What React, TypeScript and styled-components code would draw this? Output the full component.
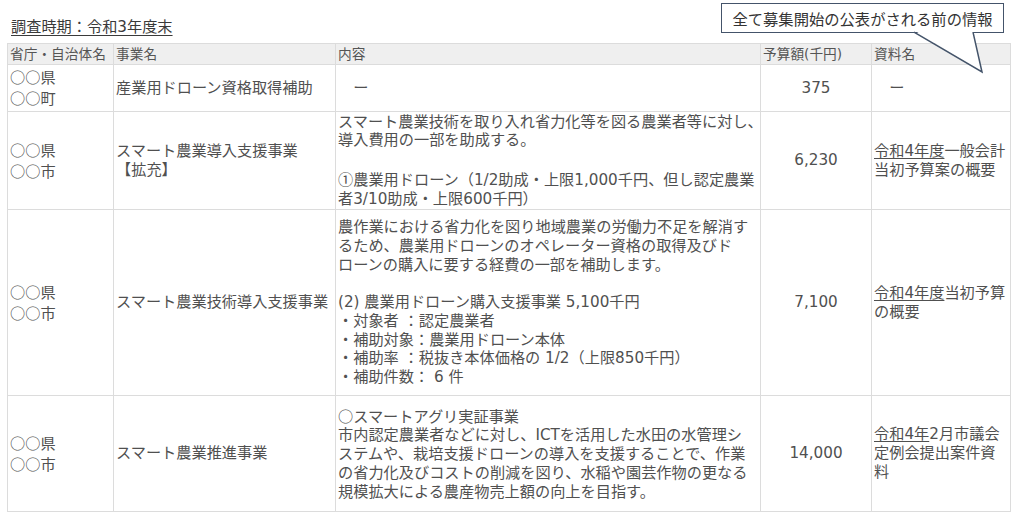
import React from "react";
import styled, { createGlobalStyle } from "styled-components";

const FONT = `"DejaVu Sans", "Noto Sans CJK JP", "Noto Sans", sans-serif`;

const GlobalStyle = createGlobalStyle`
  html, body {
    margin: 0;
    padding: 0;
    background: #ffffff;
  }
  body {
    font-family: ${FONT};
    color: #505050;
  }
`;

const Page = styled.div`
  position: relative;
  width: 1024px;
  height: 513px;
  box-sizing: border-box;
  padding: 18px 0 0 7px;
  overflow: hidden;
`;

const Title = styled.div`
  margin-left: 4px;
  font-size: 15.2px;
  line-height: 19px;
  text-decoration: underline;
  text-underline-offset: 3px;
  text-decoration-thickness: 1px;
  color: #3a3a3a;
`;

const Table = styled.table`
  margin-top: 6px;
  border-collapse: collapse;
  table-layout: fixed;
  width: 1003px;
`;

const HeadRow = styled.tr`
  height: 21px;
  background: #efefef;
`;

const HeadCell = styled.th`
  border: 1px solid #dcdcdc;
  padding: 0 2px;
  font-size: 13.7px;
  line-height: 17px;
  font-weight: normal;
  text-align: left;
  vertical-align: middle;
  white-space: nowrap;
  color: #555555;
`;

const Row = styled.tr<{ $h: number }>`
  height: ${(p) => p.$h}px;
`;

const Cell = styled.td<{ $align?: "left" | "center" }>`
  border: 1px solid #dcdcdc;
  padding: 0 2px;
  font-size: 15.2px;
  line-height: 18.75px;
  text-align: ${(p) => p.$align ?? "left"};
  vertical-align: middle;
  white-space: nowrap;
  color: #505050;
`;

const Cjk = styled.span`
  font-family: "Noto Sans CJK JP", sans-serif;
`;

const Link = styled.span`
  text-decoration: underline;
  text-underline-offset: 2px;
  text-decoration-thickness: 1px;
`;

const Callout = styled.div`
  position: absolute;
  left: 721px;
  top: 3px;
  width: 283px;
  height: 30px;
  box-sizing: border-box;
  border: 1.5px solid #44546a;
  background: #ffffff;
  display: flex;
  align-items: center;
  justify-content: center;
  font-size: 15.3px;
  color: #333333;
  z-index: 2;
`;

const Tail = styled.svg`
  position: absolute;
  left: 898px;
  top: 29px;
  z-index: 3;
  overflow: visible;
`;

type RowData = {
  h: number;
  org: React.ReactNode[];
  name: React.ReactNode[];
  content: React.ReactNode[];
  budget: string;
  doc: React.ReactNode[];
};

const circles = <Cjk>○○</Cjk>;

const rows: RowData[] = [
  {
    h: 47,
    org: [<>{circles}県</>, <>{circles}町</>],
    name: ["産業用ドローン資格取得補助"],
    content: ["　ー"],
    budget: "375",
    doc: ["　ー"],
  },
  {
    h: 98,
    org: [<>{circles}県</>, <>{circles}市</>],
    name: ["スマート農業導入支援事業", "【拡充】"],
    content: [
      "スマート農業技術を取り入れ省力化等を図る農業者等に対し、",
      "導入費用の一部を助成する。",
      "\u00a0",
      <>
        <Cjk>①</Cjk>農業用ドローン（1/2助成・上限1,000千円、但し認定農業
      </>,
      "者3/10助成・上限600千円）",
    ],
    budget: "6,230",
    doc: [
      <>
        <Link>令和4年度</Link>一般会計
      </>,
      "当初予算案の概要",
    ],
  },
  {
    h: 186,
    org: [<>{circles}県</>, <>{circles}市</>],
    name: ["スマート農業技術導入支援事業"],
    content: [
      "農作業における省力化を図り地域農業の労働力不足を解消す",
      "るため、農業用ドローンのオペレーター資格の取得及びド",
      "ローンの購入に要する経費の一部を補助します。",
      "\u00a0",
      "(2) 農業用ドローン購入支援事業 5,100千円",
      "・対象者 ：認定農業者",
      "・補助対象：農業用ドローン本体",
      "・補助率 ：税抜き本体価格の 1/2（上限850千円）",
      "・補助件数： 6 件",
    ],
    budget: "7,100",
    doc: [
      <>
        <Link>令和4年度</Link>当初予算
      </>,
      "の概要",
    ],
  },
  {
    h: 116,
    org: [<>{circles}県</>, <>{circles}市</>],
    name: ["スマート農業推進事業"],
    content: [
      <>
        <Cjk>○</Cjk>スマートアグリ実証事業
      </>,
      "市内認定農業者などに対し、ICTを活用した水田の水管理シ",
      "ステムや、栽培支援ドローンの導入を支援することで、作業",
      "の省力化及びコストの削減を図り、水稲や園芸作物の更なる",
      "規模拡大による農産物売上額の向上を目指す。",
    ],
    budget: "14,000",
    doc: [
      <>
        <Link>令和4年</Link>2月市議会
      </>,
      "定例会提出案件資",
      "料",
    ],
  },
];

const Lines: React.FC<{ lines: React.ReactNode[] }> = ({ lines }) => (
  <>
    {lines.map((l, i) => (
      <React.Fragment key={i}>
        {i > 0 && <br />}
        {l}
      </React.Fragment>
    ))}
  </>
);

export default function App() {
  return (
    <>
      <GlobalStyle />
      <Page>
        <Title>調査時期：令和3年度末</Title>
        <Table>
          <colgroup>
            <col style={{ width: 106 }} />
            <col style={{ width: 222 }} />
            <col style={{ width: 425 }} />
            <col style={{ width: 111 }} />
            <col style={{ width: 139 }} />
          </colgroup>
          <thead>
            <HeadRow>
              <HeadCell>省庁・自治体名</HeadCell>
              <HeadCell>事業名</HeadCell>
              <HeadCell>内容</HeadCell>
              <HeadCell>予算額(千円)</HeadCell>
              <HeadCell>資料名</HeadCell>
            </HeadRow>
          </thead>
          <tbody>
            {rows.map((r, i) => (
              <Row key={i} $h={r.h}>
                <Cell>
                  <Lines lines={r.org} />
                </Cell>
                <Cell>
                  <Lines lines={r.name} />
                </Cell>
                <Cell>
                  <Lines lines={r.content} />
                </Cell>
                <Cell $align="center">{r.budget}</Cell>
                <Cell>
                  <Lines lines={r.doc} />
                </Cell>
              </Row>
            ))}
          </tbody>
        </Table>
        <Callout>全て募集開始の公表がされる前の情報</Callout>
        <Tail width="90" height="46" viewBox="0 0 90 46">
          <polygon points="16.5,1.5 74.5,1.5 84,43" fill="#ffffff" />
          <path
            d="M16 3.2 L84 43 L75 3.2"
            fill="none"
            stroke="#44546a"
            strokeWidth="1.5"
            strokeLinejoin="miter"
          />
        </Tail>
      </Page>
    </>
  );
}
